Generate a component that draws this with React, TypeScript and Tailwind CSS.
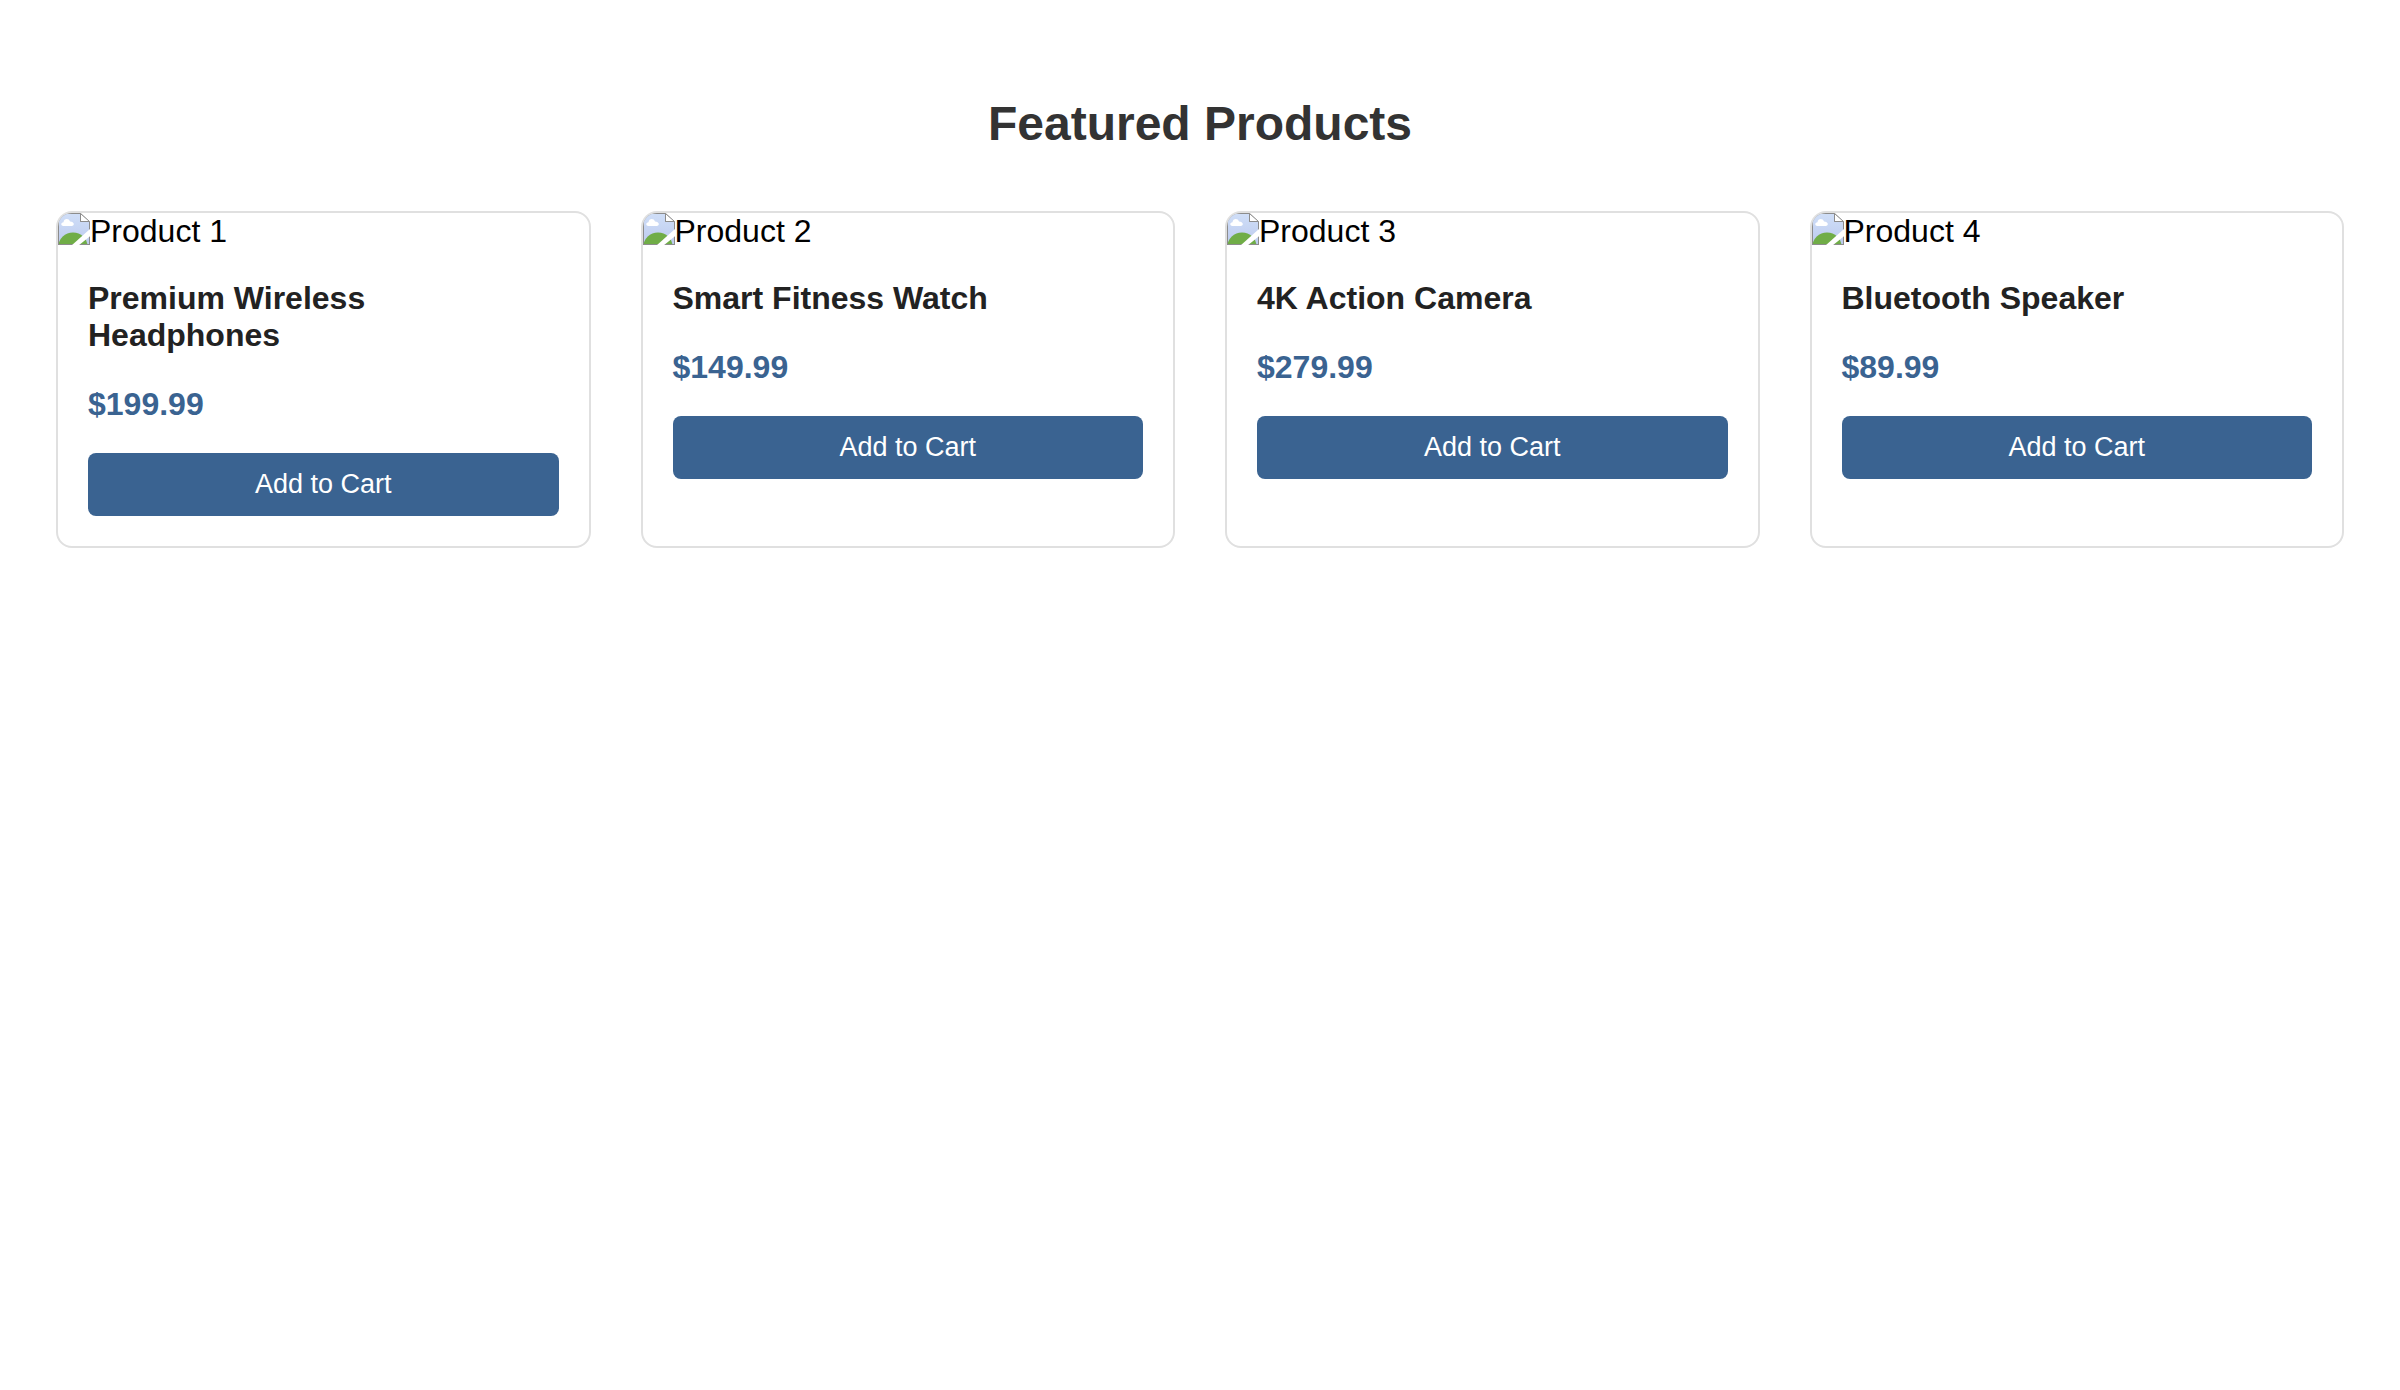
import React from "react";

type Product = { alt: string; name: string; price: string };

const products: Product[] = [
  { alt: "Product 1", name: "Premium Wireless Headphones", price: "$199.99" },
  { alt: "Product 2", name: "Smart Fitness Watch", price: "$149.99" },
  { alt: "Product 3", name: "4K Action Camera", price: "$279.99" },
  { alt: "Product 4", name: "Bluetooth Speaker", price: "$89.99" },
];

function MissingImageIcon({ id }: { id: string }) {
  return (
    <svg viewBox="0 0 32 32" className="h-8 w-8 shrink-0" aria-hidden="true">
      <defs>
        <linearGradient id={id} x1="0" y1="0" x2="0" y2="1">
          <stop offset="0" stopColor="#d0dff8" />
          <stop offset="1" stopColor="#bccaee" />
        </linearGradient>
        <clipPath id={`${id}-page`}>
          <path d="M1 1H22V9H31V31H1Z" />
        </clipPath>
      </defs>
      <path d="M0 0H22.500L32 9V32H0Z" fill="#8c8c8c" />
      <g clipPath={`url(#${id}-page)`}>
        <path d="M0 0H32V32H0Z" fill={`url(#${id})`} />
        <ellipse cx="15" cy="33" rx="14.500" ry="13.500" fill="#70ad47" />
        <path
          d="M5.500 13C2.500 13 2.500 9.500 5.500 9.300C5.500 5.300 11 4.800 12 8.500C16.500 8.500 17 13 13.500 13Z"
          fill="#ffffff"
        />
      </g>
      <path d="M22.500 0.500V8.500H31.500Z" fill="#ffffff" stroke="#8c8c8c" strokeWidth="1" strokeLinejoin="round" />
      <path d="M33 15L13.500 32.500H20.500L33 22.500Z" fill="#ffffff" />
    </svg>
  );
}

function ProductCard({ product, index }: { product: Product; index: number }) {
  return (
    <article className="overflow-hidden rounded-2xl border-2 border-[#e0e0e0] bg-white">
      <div className="flex h-[37px] items-start text-[32px] leading-[37px] text-black">
        <MissingImageIcon id={`sky-${index}`} />
        <span>{product.alt}</span>
      </div>
      <div className="p-[30px]">
        <h3 className="mb-8 text-[32px] leading-[37px] font-bold text-[#222222]">{product.name}</h3>
        <p className="mb-[30px] text-[32px] leading-[37px] font-bold text-[#3a6391]">{product.price}</p>
        <button
          type="button"
          className="block w-full cursor-pointer rounded-lg bg-[#3a6391] py-4 text-[27px] leading-[31px] text-white"
        >
          Add to Cart
        </button>
      </div>
    </article>
  );
}

export default function App() {
  return (
    <main className="px-14 py-24 font-['Liberation_Sans',Arial,sans-serif]">
      <h2 className="mb-[60px] text-center text-5xl leading-[55px] font-bold text-[#333333]">Featured Products</h2>
      <div className="grid grid-cols-4 gap-[50px]">
        {products.map((product, index) => (
          <ProductCard key={product.alt} product={product} index={index} />
        ))}
      </div>
    </main>
  );
}
